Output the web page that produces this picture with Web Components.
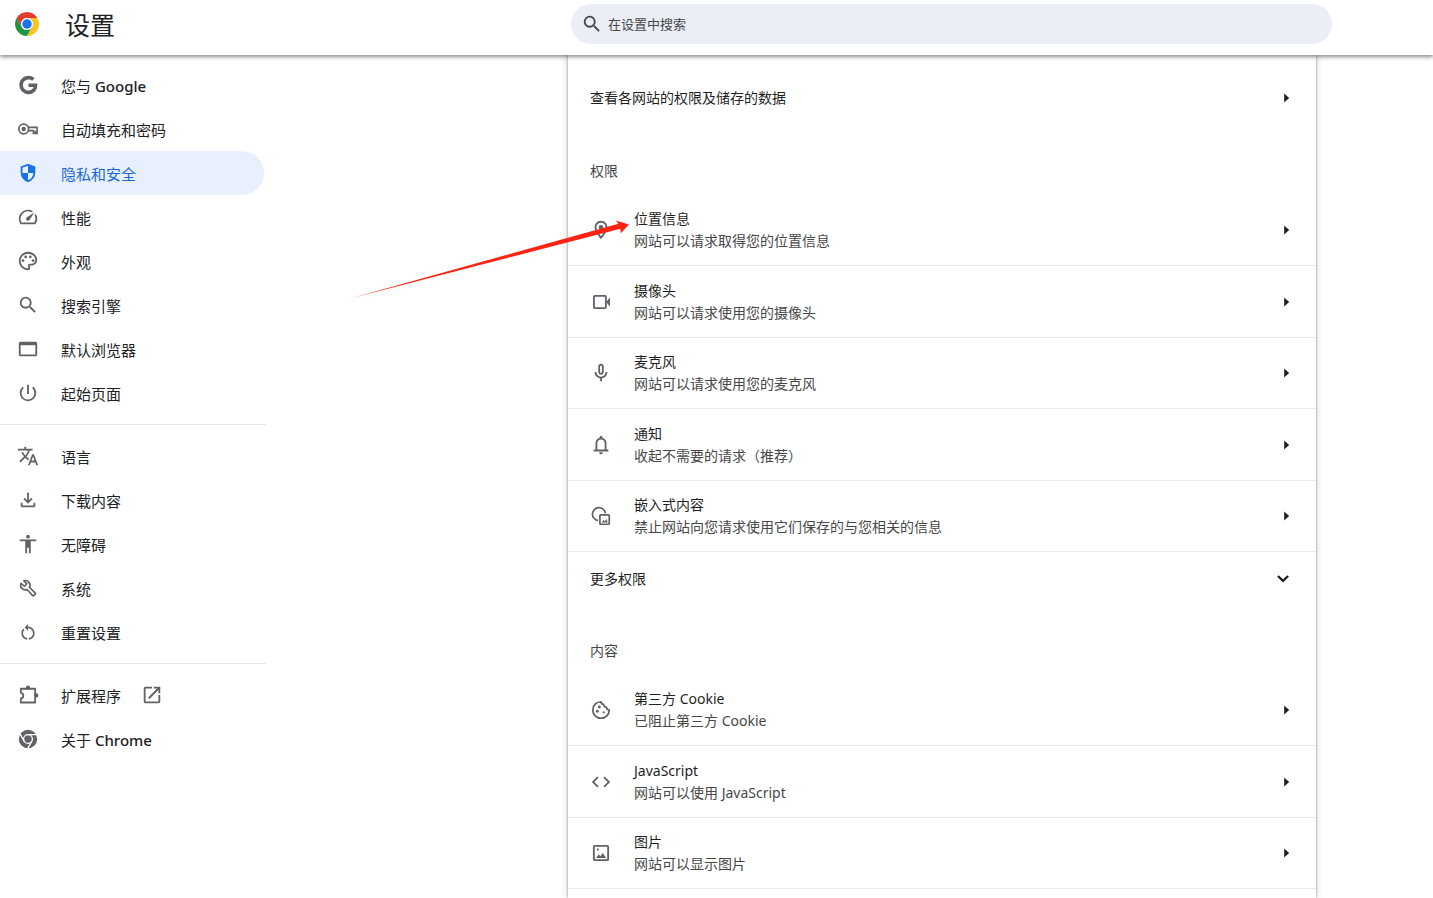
<!DOCTYPE html>
<html lang="zh-CN">
<head>
<meta charset="utf-8">
<title>设置</title>
<style>
html, body { margin: 0; height: 100%; }
body { font-family: "Noto Sans", "Noto Sans CJK SC", sans-serif; background: #fff; color: #202124; overflow: hidden; }
</style>
</head>
<body>
<settings-app></settings-app>
<script>
const ICONS = {
  google: '<path d="M12.545 10.239v3.821h5.445c-.712 2.315-2.647 3.972-5.445 3.972a6.033 6.033 0 1 1 0-12.064c1.498 0 2.866.549 3.921 1.453l2.814-2.814A9.97 9.97 0 0 0 12.545 2C7.021 2 2.543 6.477 2.543 12s4.478 10 10.002 10c8.396 0 10.249-7.85 9.426-11.748z"/>',
  key: '<g fill="none" stroke="currentColor" stroke-width="1.8"><circle cx="7.3" cy="12" r="5.3"/><path d="M12 10.2h9.900v6.600h-4v-3h-5.700M20 14v3"/></g><circle cx="7.3" cy="12" r="2.4"/>',
  shield: '<path d="M12 22q-3.475-.875-5.738-3.988Q4 14.9 4 11.1V5l8-3 8 3v6.1q0 3.8-2.262 6.912Q15.475 21.125 12 22Zm0-2.1q2.425-.75 4.05-2.963T17.95 12H12V4.125l-6 2.25v5.175q0 .175.05.45H12Z"/>',
  speed: '<path d="M20.38 8.57l-1.23 1.85a8 8 0 0 1-.22 7.58H5.07A8 8 0 0 1 15.58 6.85l1.85-1.23A10 10 0 0 0 3.35 19a2 2 0 0 0 1.72 1h13.85a2 2 0 0 0 1.74-1 10 10 0 0 0-.27-10.44zm-9.79 6.84a2 2 0 0 0 2.83 0l5.66-8.49-8.49 5.66a2 2 0 0 0 0 2.83z"/>',
  palette: '<path d="M12 22C6.49 22 2 17.51 2 12S6.49 2 12 2s10 4.04 10 9c0 3.31-2.69 6-6 6h-1.77c-.28 0-.5.22-.5.5 0 .12.05.23.13.33.41.47.64 1.06.64 1.67A2.5 2.5 0 0 1 12 22zm0-18c-4.41 0-8 3.59-8 8s3.59 8 8 8c.28 0 .5-.22.5-.5a.54.54 0 0 0-.14-.35c-.41-.46-.63-1.05-.63-1.65a2.5 2.5 0 0 1 2.5-2.5H16c2.21 0 4-1.79 4-4 0-3.86-3.59-7-8-7z"/><circle cx="6.5" cy="11.5" r="1.5"/><circle cx="9.5" cy="7.5" r="1.5"/><circle cx="14.5" cy="7.5" r="1.5"/><circle cx="17.5" cy="11.5" r="1.5"/>',
  search: '<path d="M15.5 14h-.79l-.28-.27A6.47 6.47 0 0 0 16 9.5 6.5 6.5 0 1 0 9.5 16c1.61 0 3.09-.59 4.23-1.57l.27.28v.79l5 4.99L20.49 19l-4.99-5zm-6 0C7.01 14 5 11.99 5 9.5S7.01 5 9.5 5 14 7.01 14 9.5 11.99 14 9.5 14z"/>',
  browser: '<path d="M20 4H4c-1.1 0-2 .9-2 2v12c0 1.1.9 2 2 2h16c1.11 0 2-.9 2-2V6c0-1.1-.9-2-2-2zm0 14H4V8h16v10z"/>',
  power: '<path d="M13 3h-2v10h2V3zm4.83 2.17l-1.42 1.42A6.92 6.92 0 0 1 19 12c0 3.87-3.13 7-7 7A6.995 6.995 0 0 1 7.58 6.58L6.17 5.17A8.932 8.932 0 0 0 3 12a9 9 0 0 0 18 0c0-2.74-1.23-5.18-3.17-6.83z"/>',
  translate: '<path d="M12.87 15.07l-2.54-2.51.03-.03A17.52 17.52 0 0 0 14.07 6H17V4h-7V2H8v2H1v1.99h11.17C11.5 7.92 10.44 9.75 9 11.35 8.07 10.32 7.3 9.19 6.69 8h-2c.73 1.63 1.73 3.17 2.98 4.56l-5.09 5.02L4 19l5-5 3.11 3.11.76-2.04zM18.5 10h-2L12 22h2l1.12-3h4.75L21 22h2l-4.5-12zm-2.62 7l1.62-4.33L19.12 17h-3.24z"/>',
  download: '<path d="M12 16l-5-5 1.4-1.45 2.6 2.6V4h2v8.15l2.6-2.6L17 11zM6 20q-.825 0-1.412-.587Q4 18.825 4 18v-3h2v3h12v-3h2v3q0 .825-.587 1.413Q18.825 20 18 20z"/>',
  accessibility: '<path d="M12 2c1.1 0 2 .9 2 2s-.9 2-2 2-2-.9-2-2 .9-2 2-2zm9 7h-6v13h-2v-6h-2v6H9V9H3V7h18v2z"/>',
  wrench: '<path d="M7.500 4.200L10.800 7.400 8.100 10.100 4.500 6.900A5 5 0 0 0 11 13.600L17.100 20.300q.6.500 1.200 0L19.900 18.700q.5-.6 0-1.200L13.600 11.200A5 5 0 0 0 7.500 4.200z" fill="none" stroke="currentColor" stroke-width="1.8" stroke-linejoin="round"/>',
  reset: '<path transform="translate(1.2 1.6) scale(.9)" d="M12 5V2L8 6l4 4V7c3.31 0 6 2.69 6 6 0 2.97-2.17 5.43-5 5.91v2.02c3.95-.49 7-3.85 7-7.93 0-4.42-3.58-8-8-8zm-6 8c0-1.65.67-3.15 1.76-4.24L6.34 7.34A8.014 8.014 0 0 0 4 13c0 4.08 3.05 7.44 7 7.93v-2.02c-2.83-.48-5-2.94-5-5.91z"/>',
  extension: '<path d="M4.2 5.2h15.6v15H4.2v-4.400c3.600-.6 3.600-5.600 0-6.200z" fill="none" stroke="currentColor" stroke-width="2" stroke-linejoin="round"/><circle cx="12" cy="4" r="2.3"/><circle cx="21" cy="12.5" r="2.3"/>',
  chromeMono: '<g transform="translate(2 2) scale(.4167)"><circle cx="24" cy="24" r="24"/><g fill="none" stroke="#fff" stroke-width="3.5"><circle cx="24" cy="24" r="11.5"/><path d="M24 12.500H46M14 29.800L3 10.800M34 29.800L23 49"/></g></g>',
  external: '<path d="M19 19H5V5h7V3H5a2 2 0 0 0-2 2v14a2 2 0 0 0 2 2h14c1.1 0 2-.9 2-2v-7h-2v7zM14 3v2h3.59l-9.83 9.83 1.41 1.41L19 6.41V10h2V3h-7z"/>',
  location: '<path d="M12 2C8.13 2 5 5.13 5 9c0 5.25 7 13 7 13s7-7.75 7-13c0-3.87-3.13-7-7-7zM7 9c0-2.76 2.24-5 5-5s5 2.24 5 5c0 2.88-2.88 7.19-5 9.88C9.92 16.21 7 11.85 7 9z"/><circle cx="12" cy="9" r="2.5"/>',
  camera: '<rect x="4.3" y="5.3" width="13" height="13.4" rx="1" fill="none" stroke="currentColor" stroke-width="2"/><path d="M17.500 12l4.300-5v10z"/>',
  mic: '<path d="M12 14c1.66 0 3-1.34 3-3V5c0-1.66-1.34-3-3-3S9 3.34 9 5v6c0 1.66 1.34 3 3 3zm-1-9c0-.55.45-1 1-1s1 .45 1 1v6c0 .55-.45 1-1 1s-1-.45-1-1V5zm6 6c0 2.76-2.24 5-5 5s-5-2.24-5-5H5c0 3.53 2.61 6.43 6 6.92V21h2v-3.08c3.39-.49 6-3.39 6-6.92h-2z"/>',
  bell: '<path d="M4 19v-2h2v-7q0-2.075 1.25-3.688Q8.5 4.7 10.5 4.2v-.7q0-.625.438-1.062Q11.375 2 12 2t1.063.438Q13.5 2.875 13.5 3.5v.7q2 .5 3.25 2.112Q18 7.925 18 10v7h2v2Zm8 3q-.825 0-1.412-.587Q10 20.825 10 20h4q0 .825-.588 1.413Q12.825 22 12 22Zm-4-5h8v-7q0-1.65-1.175-2.825Q13.65 6 12 6q-1.65 0-2.825 1.175Q8 8.35 8 10Z"/>',
  embed: '<g fill="none" stroke="currentColor" stroke-width="1.9"><path d="M8.800 17A7.100 7.100 0 1 1 16.800 9"/><rect x="10.800" y="10.800" width="10.200" height="10.200" rx=".8"/></g><path d="M12.800 19l1.800-2.800 1.400 1.700 1.800-2.600 1.600 3.700z"/>',
  cookie: '<path d="M12 3a9 9 0 1 0 9 9c-2-.2-3.200-1.400-3.200-3.200-1.900-.1-3-1.100-2.900-2.900C13 5.700 12 4.600 12 3z" fill="none" stroke="currentColor" stroke-width="1.9" stroke-linejoin="round"/><circle cx="10.2" cy="8.7" r="1.6"/><circle cx="8" cy="13.4" r="1.6"/><circle cx="14.9" cy="14.5" r="1.2"/>',
  code: '<path d="M9.4 16.6L4.8 12l4.6-4.6L8 6l-6 6 6 6 1.4-1.4zm5.2 0l4.6-4.6-4.6-4.6L16 6l6 6-6 6-1.4-1.4z"/>',
  image: '<rect x="4.2" y="4.2" width="15.6" height="15.6" rx="1" fill="none" stroke="currentColor" stroke-width="2"/><path d="M6.500 17.500l3-4.200 1.800 2.300 2.500-3.600 3.800 5.500z"/><circle cx="8.7" cy="8.2" r="1.2"/>',
  chevron: '<path d="M12 15.800l-6.400-6.300 1.700-1.700 4.700 4.600 4.700-4.600 1.700 1.700z"/>',
  caret: '<path d="M10 7l5.500 5-5.500 5z"/>',
  chrome: '<g transform="scale(.5)"><path fill="#e33b2e" d="M24 12h20.780A24 24 0 0 0 3.216 12.003L13.608 30A12 12 0 0 1 24 12z"/><path fill="#229342" d="M13.609 30.003L3.219 12.006A24 24 0 0 0 24.004 48l10.390-17.997a12 12 0 0 1-20.785 0z"/><path fill="#fcc31e" d="M34.391 30.003L24.003 48A24 24 0 0 0 44.781 12.003H24a12 12 0 0 1 10.391 18z"/><circle cx="24" cy="24" r="12" fill="#fff"/><circle cx="24" cy="24" r="9.5" fill="#1a73e8"/></g>'
};

/* Base class: renders the subclass's template into an open shadow root. */
class Base extends HTMLElement {
  connectedCallback() {
    if (this.shadowRoot) return;
    const t = document.createElement('template');
    t.innerHTML = this.render();
    this.attachShadow({ mode: 'open' }).append(t.content.cloneNode(true));
  }
}

customElements.define('ui-icon', class extends Base {
  render() {
    return `<style>
      :host { display: block; flex: none; width: 22px; height: 22px; }
      svg { display: block; width: 100%; height: 100%; fill: currentColor; }
    </style><svg viewBox="0 0 24 24" aria-hidden="true">${ICONS[this.getAttribute('name')]}</svg>`;
  }
});

customElements.define('settings-header', class extends Base {
  render() {
    return `<style>
      :host { display: flex; align-items: center; height: 48px; padding: 0 101px 7px 15px; background: #fff;
        position: relative; z-index: 2; box-shadow: 0 2px 4px rgba(0,0,0,.45); }
      .brand { display: flex; align-items: center; gap: 26px; width: 556px; flex: none; }
      .brand ui-icon { width: 24px; height: 24px; }
      h1 { margin: 0; padding-top: 2px; font-size: 25px; line-height: 32px; font-weight: 400; }
      label { flex: 1; min-width: 0; height: 40px; border-radius: 20px; background: #ebeef7; color: #474747;
        display: flex; align-items: center; gap: 5px; padding: 0 10px; box-sizing: border-box; }
      input { flex: 1; min-width: 0; border: 0; padding: 0; background: none; outline: 0;
        font: 13px/20px "Noto Sans", "Noto Sans CJK SC", sans-serif; color: inherit; }
      input::placeholder { color: #474747; opacity: 1; }
    </style>
    <div class="brand"><ui-icon name="chrome"></ui-icon><h1>设置</h1></div>
    <label><ui-icon name="search"></ui-icon><input type="search" placeholder="在设置中搜索" aria-label="在设置中搜索"></label>`;
  }
});

customElements.define('nav-item', class extends Base {
  render() {
    return `<style>
      :host { display: block; margin-right: 2px; }
      a { display: flex; align-items: center; gap: 22px; height: 44px; padding-left: 17px; border-radius: 0 22px 22px 0;
        text-decoration: none; color: #202124; font-size: 15px; line-height: 20px; }
      ui-icon { color: #5f6368; }
      span { padding-top: 2px; }
      ::slotted(b) { font-weight: 500; }
      :host([selected]) a { background: #e8f0fe; color: #1967d2; }
      :host([selected]) ui-icon { color: #1a73e8; }
      .ext { margin-left: -2px; }
    </style>
    <a href="#${this.getAttribute('icon')}"><ui-icon name="${this.getAttribute('icon')}"></ui-icon><span><slot></slot></span>
    ${this.hasAttribute('external') ? '<ui-icon class="ext" name="external"></ui-icon>' : ''}</a>`;
  }
});

customElements.define('settings-nav', class extends Base {
  render() {
    return `<style>
      :host { display: block; width: 266px; flex: none; padding-top: 8px; }
      hr { border: 0; border-top: 1px solid #e4e4e4; margin: 9px 0; }
    </style>
    <nav>
      <nav-item icon="google">您与 <b>Google</b></nav-item>
      <nav-item icon="key">自动填充和密码</nav-item>
      <nav-item icon="shield" selected>隐私和安全</nav-item>
      <nav-item icon="speed">性能</nav-item>
      <nav-item icon="palette">外观</nav-item>
      <nav-item icon="search">搜索引擎</nav-item>
      <nav-item icon="browser">默认浏览器</nav-item>
      <nav-item icon="power">起始页面</nav-item>
      <hr>
      <nav-item icon="translate">语言</nav-item>
      <nav-item icon="download">下载内容</nav-item>
      <nav-item icon="accessibility">无障碍</nav-item>
      <nav-item icon="wrench">系统</nav-item>
      <nav-item icon="reset">重置设置</nav-item>
      <hr>
      <nav-item icon="extension" external>扩展程序</nav-item>
      <nav-item icon="chromeMono">关于 <b>Chrome</b></nav-item>
    </nav>`;
  }
});

customElements.define('link-row', class extends Base {
  render() {
    const icon = this.getAttribute('icon');
    const more = this.hasAttribute('expand');
    return `<style>
      :host { display: block; height: 54px; box-sizing: border-box; color: #1f1f1f; }
      button { display: flex; align-items: center; gap: 22px; width: 100%; height: 100%; padding: 0 19px 0 22px;
        border: 0; background: none; color: inherit; font: inherit; font-size: 14px; line-height: 22px; text-align: left; }
      ui-icon { color: #5f6368; }
      .text { flex: 1; min-width: 0; display: block; }
      .sub { display: block; color: #474747; }
      .end { color: #1f1f1f; }
      .more { margin-right: 3px; }
    </style>
    <button type="button">${icon ? `<ui-icon name="${icon}"></ui-icon>` : ''}
      <span class="text"><slot></slot><span class="sub"><slot name="sub"></slot></span></span>
      <ui-icon class="end ${more ? 'more' : ''}" name="${more ? 'chevron' : 'caret'}"></ui-icon></button>`;
  }
});

customElements.define('settings-section', class extends Base {
  render() {
    return `<style>
      :host { display: block; }
      h2 { margin: 0; padding: 35px 22px 12px; font-size: 14px; line-height: 22px; font-weight: 400; color: #474747; }
      ::slotted(link-row) { height: 71px; }
      ::slotted(link-row:nth-child(even)) { height: 72px; }
      ::slotted(link-row:not(:first-child)) { border-top: 1px solid #ebebeb; }
      ::slotted(link-row[expand]) { height: 54px; }
      ::slotted(hr) { margin: 0; border: 0; border-top: 1px solid #ebebeb; }
    </style><h2>${this.getAttribute('heading')}</h2><slot></slot>`;
  }
});

customElements.define('settings-card', class extends Base {
  render() {
    return `<style>
      :host { display: block; flex: 1; min-width: 0; padding-top: 16px; background: #fff;
        box-shadow: 0 0 2px rgba(0,0,0,.45), 0 0 8px rgba(0,0,0,.18); }
    </style>
    <link-row>查看各网站的权限及储存的数据</link-row>
    <settings-section heading="权限">
      <link-row icon="location">位置信息<span slot="sub">网站可以请求取得您的位置信息</span></link-row>
      <link-row icon="camera">摄像头<span slot="sub">网站可以请求使用您的摄像头</span></link-row>
      <link-row icon="mic">麦克风<span slot="sub">网站可以请求使用您的麦克风</span></link-row>
      <link-row icon="bell">通知<span slot="sub">收起不需要的请求（推荐）</span></link-row>
      <link-row icon="embed">嵌入式内容<span slot="sub">禁止网站向您请求使用它们保存的与您相关的信息</span></link-row>
      <link-row expand>更多权限</link-row>
    </settings-section>
    <settings-section heading="内容">
      <link-row icon="cookie">第三方 Cookie<span slot="sub">已阻止第三方 Cookie</span></link-row>
      <link-row icon="code">JavaScript<span slot="sub">网站可以使用 JavaScript</span></link-row>
      <link-row icon="image">图片<span slot="sub">网站可以显示图片</span></link-row>
      <hr>
    </settings-section>`;
  }
});

customElements.define('pointer-arrow', class extends Base {
  render() {
    return `<style>
      :host { display: block; position: absolute; left: 350px; top: 215px; width: 280px; height: 85px; z-index: 3; pointer-events: none; }
      svg { display: block; width: 100%; height: 100%; }
    </style><svg viewBox="350 215 280 85" aria-hidden="true"><path fill="#fe2312" d="M351 298.300L567 238l51.500-14.300-2.800-3.200L629 224.400l-8.200 8.800-.5-4.500L567 242.600z"/></svg>`;
  }
});

customElements.define('settings-app', class extends Base {
  render() {
    return `<style>
      :host { display: flex; flex-direction: column; min-height: 100vh; position: relative; }
      .body { flex: 1; display: flex; }
      main { flex: 1; display: flex; padding: 0 117px 0 302px; }
    </style>
    <settings-header></settings-header>
    <div class="body"><settings-nav></settings-nav><main><settings-card></settings-card></main></div>
    <pointer-arrow></pointer-arrow>`;
  }
});
</script>
</body>
</html>
